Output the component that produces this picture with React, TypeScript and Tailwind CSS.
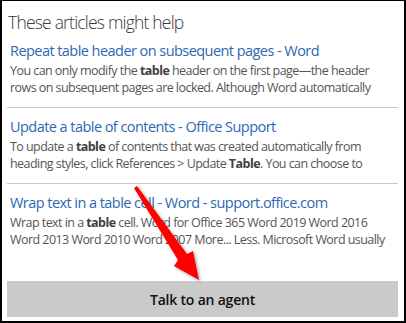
import React from "react";

const B = ({ children }: { children: React.ReactNode }) => <b className="font-bold text-[#404040]">{children}</b>;

const articles: { title: string; lines: React.ReactNode[] }[] = [
  {
    title: "Repeat table header on subsequent pages - Word",
    lines: [
      <>You can only modify the <B>table</B> header on the first page—the header</>,
      <>rows on subsequent pages are locked. Although Word automatically</>,
    ],
  },
  {
    title: "Update a table of contents - Office Support",
    lines: [
      <>To update a <B>table</B> of contents that was created automatically from</>,
      <>heading styles, click References &gt; Update <B>Table</B>. You can choose to</>,
    ],
  },
  {
    title: "Wrap text in a table cell - Word - support.office.com",
    lines: [
      <>Wrap text in a <B>table</B> cell. Word for Office 365 Word 2019 Word 2016</>,
      <>Word 2013 Word 2010 Word 2007 More... Less. Microsoft Word usually</>,
    ],
  },
];

export default function App() {
  return (
    <div
      className="relative w-[406px] h-[323px] bg-white border-black border-t-[1px] border-l-2 border-r-2 border-b-2 overflow-hidden"
      style={{ fontFamily: '"Open Sans", "Noto Sans", sans-serif' }}
    >
      <div className="pl-[5px] pr-[6px] flex flex-col h-full">
        <div className="pl-[1px] pt-[9px] text-[17.5px] leading-[24px] text-[#3a3a3a] font-light tracking-[-0.8px] whitespace-nowrap">
          These articles might help
        </div>
        <div className="flex flex-col mt-[7px]">
          {articles.map((a, i) => (
            <div
              key={i}
              className={"pl-[3px] " + (i < 2 ? "border-b border-[#c8c8c8] pb-[11px] mb-[9px]" : "")}
            >
              <div className="text-[14.5px] leading-[20px] text-[#2d68b4] tracking-[-0.55px] whitespace-nowrap mb-[1px]">
                {a.title}
              </div>
              {a.lines.map((l, j) => (
                <div key={j} className="text-[12.5px] leading-[17px] text-[#555555] tracking-[-0.55px] whitespace-nowrap">
                  {l}
                </div>
              ))}
            </div>
          ))}
        </div>
        <div className="mt-auto mb-[4px] h-[36px] bg-[#cacaca] flex items-center justify-center text-[14px] font-semibold text-[#111111] tracking-[-0.2px]">
          Talk to an agent
        </div>
      </div>
      <svg className="absolute left-0 top-0 pointer-events-none" width="406" height="323" viewBox="0 0 406 323">
        <defs>
          <filter id="sh" x="-20%" y="-20%" width="140%" height="140%">
            <feDropShadow dx="1.5" dy="1.5" stdDeviation="1.5" floodColor="#000" floodOpacity="0.35" />
          </filter>
        </defs>
        <polygon
          points="132,187 135,185 185,253 191,250 197,279 172,265 176,259"
          fill="#ff0000"
          filter="url(#sh)"
        />
      </svg>
    </div>
  );
}
